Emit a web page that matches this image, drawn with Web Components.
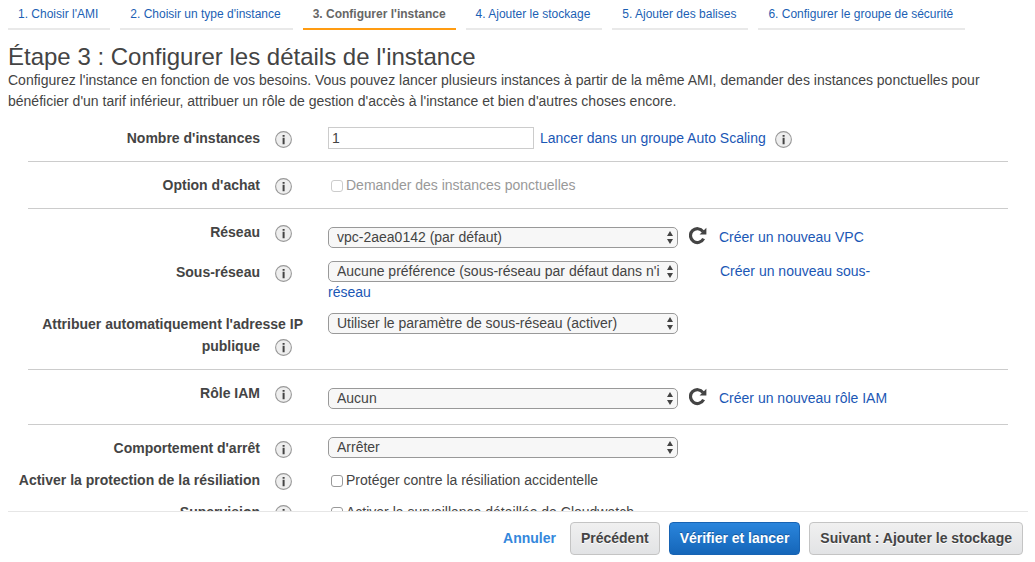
<!DOCTYPE html>
<html lang="fr">
<head>
<meta charset="utf-8">
<meta name="viewport" content="width=device-width, initial-scale=1">
<title>Configurer les détails de l'instance</title>
<style>
  html, body { height: 100%; margin: 0; }
  body { background: #fff; color: #444; font: 14px/21px "Liberation Sans", Arial, sans-serif; }
</style>
</head>
<body>
<wizard-page>
  <wizard-tabs slot="tabs">
    <wizard-tab href="#ami">1. Choisir l'AMI</wizard-tab>
    <wizard-tab href="#type">2. Choisir un type d'instance</wizard-tab>
    <wizard-tab href="#instance" current>3. Configurer l'instance</wizard-tab>
    <wizard-tab href="#stockage">4. Ajouter le stockage</wizard-tab>
    <wizard-tab href="#balises">5. Ajouter des balises</wizard-tab>
    <wizard-tab href="#securite">6. Configurer le groupe de sécurité</wizard-tab>
  </wizard-tabs>
  <step-intro heading="Étape 3 : Configurer les détails de l'instance">Configurez l'instance en fonction de vos besoins. Vous pouvez lancer plusieurs instances à partir de la même AMI, demander des instances ponctuelles pour bénéficier d'un tarif inférieur, attribuer un rôle de gestion d'accès à l'instance et bien d'autres choses encore.</step-intro>
  <form-section>
    <text-row label="Nombre d'instances" value="1"><a href="#autoscaling">Lancer dans un groupe Auto Scaling</a><info-button></info-button></text-row>
  </form-section>
  <form-section>
    <check-row label="Option d'achat" text="Demander des instances ponctuelles" disabled></check-row>
  </form-section>
  <form-section>
    <select-row label="Réseau" value="vpc-2aea0142 (par défaut)" lowered><refresh-button></refresh-button><a href="#vpc">Créer un nouveau VPC</a></select-row>
    <select-row label="Sous-réseau" value="Aucune préférence (sous-réseau par défaut dans n'i" bare><a href="#subnet">Créer un nouveau sous-réseau</a></select-row>
    <select-row label="Attribuer automatiquement l'adresse IP publique" value="Utiliser le paramètre de sous-réseau (activer)"></select-row>
  </form-section>
  <form-section>
    <select-row label="Rôle IAM" value="Aucun" lowered><refresh-button></refresh-button><a href="#iam">Créer un nouveau rôle IAM</a></select-row>
  </form-section>
  <form-section>
    <select-row label="Comportement d'arrêt" value="Arrêter"></select-row>
    <check-row label="Activer la protection de la résiliation" text="Protéger contre la résiliation accidentelle"></check-row>
    <check-row label="Supervision" text="Activer la surveillance détaillée de Cloudwatch"></check-row>
  </form-section>
  <action-bar slot="actions">
    <action-button kind="link">Annuler</action-button>
    <action-button>Précédent</action-button>
    <action-button kind="primary">Vérifier et lancer</action-button>
    <action-button>Suivant : Ajouter le stockage</action-button>
  </action-bar>
</wizard-page>

<script>
class Base extends HTMLElement {
  connectedCallback() {
    if (this.shadowRoot) return;
    this.attachShadow({ mode: 'open' }).innerHTML = `<style>*{box-sizing:border-box}${this.css()}</style>${this.html()}`;
  }
  css() { return ''; }
  html() { return '<slot></slot>'; }
}

class WizardPage extends Base {
  css() { return `
    :host { display: flex; flex-direction: column; height: 100%; padding: 0 7px 0 8px; box-sizing: border-box; }
    main { flex: 1; min-height: 0; overflow-y: auto; scrollbar-width: none; }`; }
  html() { return '<main><slot name="tabs"></slot><slot></slot></main><slot name="actions"></slot>'; }
}

class WizardTabs extends Base {
  css() { return ':host { display: block } nav { display: flex; gap: 10px; }'; }
  html() { return '<nav aria-label="Étapes"><slot></slot></nav>'; }
}

class WizardTab extends Base {
  css() { return `
    :host { display: block; font-size: 12px; line-height: 28px; white-space: nowrap; }
    a { display: block; padding: 0 12px 0 10px; color: #1b5fb4; text-decoration: none; border-bottom: 2px solid #e9e9e9; }
    :host([current]) a { padding: 0 10px; color: #666; font-weight: bold; border-color: #ff9c12; }`; }
  html() { return `<a href="${this.getAttribute('href')}"><slot></slot></a>`; }
}

class StepIntro extends Base {
  css() { return `
    :host { display: block; padding: 14px 0 3px; }
    h1 { margin: 0; font-size: 24px; line-height: 26px; font-weight: normal; }
    p { margin: 0; }`; }
  html() { return `<h1>${this.getAttribute('heading')}</h1><p><slot></slot></p>`; }
}

class FormSection extends Base {
  css() { return `
    :host { display: block; }
    div { display: grid; gap: 10px; padding: 12px 0; }
    hr { margin: 0 20px; border: 0; height: 1px; background: #ccc; }
    :host(:last-of-type) hr { display: none; }`; }
  html() { return '<div><slot></slot></div><hr>'; }
}

class InfoButton extends Base {
  css() { return `
    :host { display: inline-block; width: 17px; height: 17px; margin: 4px 0 0 15px; vertical-align: top; }
    button { display: block; padding: 0; border: 0; background: none; }
    svg { display: block; }`; }
  html() { return `<button type="button" aria-label="Informations"><svg width="17" height="17" viewBox="0 0 17 17">
    <circle cx="8.5" cy="8.5" r="7.9" fill="#eee" stroke="#999" stroke-width="1.1"/>
    <path d="M7.6 4h2v1.8h-2zM7.6 6.8h2V13.2h-2z" fill="#444"/></svg></button>`; }
}

class RefreshButton extends Base {
  css() { return `
    :host { display: inline-block; width: 18px; height: 18px; vertical-align: top; }
    button { display: block; padding: 0; border: 0; background: none; }
    svg { display: block; }`; }
  html() { return `<button type="button" aria-label="Actualiser"><svg width="18" height="18" viewBox="0 0 18 18">
    <path d="M14 4.6A6.9 6.9 0 1 0 14.6 11.6" fill="none" stroke="#444" stroke-width="3.2"/>
    <path d="M17.4 .8v6.6H10.6z" fill="#444"/></svg></button>`; }
}

class FieldRow extends Base {
  css() { return `
    :host { display: grid; grid-template-columns: 295px minmax(0, 570px); column-gap: 25px; }
    .label { text-align: right; line-height: 22px; font-weight: bold; }
    .label info-button { margin-right: 11px; }
    :host([lowered]) .control { padding: 6px 0 3px; }
    ::slotted(a) { color: #1b57b5; text-decoration: none; }
    ${this.controlCss()}`; }
  html() { return `<div class="label"><label for="field">${this.getAttribute('label')}</label><info-button></info-button></div>
    <div class="control">${this.control()}</div>`; }
}

class TextRow extends FieldRow {
  controlCss() { return `
    .control { line-height: 22px; }
    input { width: 206px; height: 22px; margin: 0 6px 0 0; padding: 0 3px; border: 1px solid #ccc; vertical-align: top; font: inherit; color: inherit; }
    ::slotted(info-button) { margin-left: 9px; }`; }
  control() { return `<input id="field" type="text" value="${this.getAttribute('value')}"><slot></slot>`; }
}

class CheckRow extends FieldRow {
  controlCss() { return `
    .control { display: flex; align-items: center; gap: 3px; padding-left: 3px; line-height: 22px; }
    input { appearance: none; width: 12px; height: 12px; margin: 2px 0 0; border: 1px solid #999; border-radius: 3px; background: #fff; }
    input:checked { background: #1b57b5; }
    :host([disabled]) input { border-color: #ccc; }
    :host([disabled]) .text { color: #999; }`; }
  control() { return `<input id="field" type="checkbox"${this.hasAttribute('disabled') ? ' disabled' : ''}><label class="text" for="field">${this.getAttribute('text')}</label>`; }
}

class SelectRow extends FieldRow {
  controlCss() { return `
    .select { display: inline-grid; width: 350px; max-width: 100%; height: 21px; margin-right: 11px; vertical-align: top; }
    :host([bare]) .select { margin-right: 42px; }
    select, .arrows { grid-area: 1 / 1; }
    select { appearance: none; width: 100%; height: 21px; padding: 0 16px 0 8px; border: 1px solid #999; border-radius: 5px; background: #f7f7f7; color: inherit; font: inherit; line-height: 19px; }
    .arrows { justify-self: end; align-self: center; margin-right: 5px; pointer-events: none; }
    ::slotted(refresh-button) { margin-right: 12px; }`; }
  control() { return `<span class="select"><select id="field"><option>${this.getAttribute('value')}</option></select><svg class="arrows" width="6" height="13" viewBox="0 0 6 13"><path d="M3 0l3 5H0zM3 13l3-5H0z" fill="#444"/></svg></span><slot></slot>`; }
}

class ActionBar extends Base {
  css() { return `
    :host { display: block; flex: none; }
    div { display: flex; justify-content: flex-end; gap: 9px; padding: 10px 5px 7px 0; border-top: 1px solid #e6e6e6; }`; }
  html() { return '<div><slot></slot></div>'; }
}

class ActionButton extends Base {
  css() { return `
    :host { display: block; }
    button { height: 33px; padding: 0 10px; border: 1px solid #c4c4c4; border-radius: 4px; background: linear-gradient(#f0f0f0, #e2e3e5); color: #444; font: bold 14px/21px "Liberation Sans", Arial, sans-serif; text-shadow: 0 1px 0 #fff; white-space: nowrap; }
    :host([kind=primary]) button { border-color: #1763b3; background: linear-gradient(#2a85dc, #1566b9); color: #fff; text-shadow: 0 -1px 0 #1558a0; }
    :host([kind=link]) button { padding: 0 4px; border-color: transparent; background: none; color: #3487dc; text-shadow: none; }`; }
  html() { return '<button type="button"><slot></slot></button>'; }
}

customElements.define('wizard-page', WizardPage);
customElements.define('wizard-tabs', WizardTabs);
customElements.define('wizard-tab', WizardTab);
customElements.define('step-intro', StepIntro);
customElements.define('form-section', FormSection);
customElements.define('info-button', InfoButton);
customElements.define('refresh-button', RefreshButton);
customElements.define('text-row', TextRow);
customElements.define('check-row', CheckRow);
customElements.define('select-row', SelectRow);
customElements.define('action-bar', ActionBar);
customElements.define('action-button', ActionButton);
</script>
</body>
</html>
